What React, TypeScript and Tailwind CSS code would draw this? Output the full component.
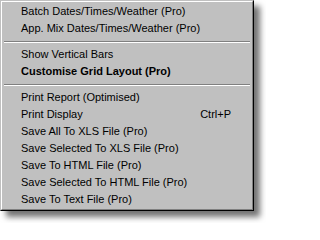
import React from 'react';

type MenuEntry =
    | { kind: 'item'; label: string; shortcut?: string; bold?: boolean }
    | { kind: 'separator' };

const entries: MenuEntry[] = [
    { kind: 'item', label: 'Batch Dates/Times/Weather (Pro)' },
    { kind: 'item', label: 'App. Mix Dates/Times/Weather (Pro)' },
    { kind: 'separator' },
    { kind: 'item', label: 'Show Vertical Bars' },
    { kind: 'item', label: 'Customise Grid Layout (Pro)', bold: true },
    { kind: 'separator' },
    { kind: 'item', label: 'Print Report (Optimised)' },
    { kind: 'item', label: 'Print Display', shortcut: 'Ctrl+P' },
    { kind: 'item', label: 'Save All To XLS File (Pro)' },
    { kind: 'item', label: 'Save Selected To XLS File (Pro)' },
    { kind: 'item', label: 'Save To HTML File (Pro)' },
    { kind: 'item', label: 'Save Selected To HTML File (Pro)' },
    { kind: 'item', label: 'Save To Text File (Pro)' },
];

const MenuRow: React.FC<{ label: string; shortcut?: string; bold?: boolean }> = ({ label, shortcut, bold }) => (
    <div className="flex items-center h-[17px] leading-[17px] pl-[18px] pr-[20px] text-black whitespace-nowrap">
        <span className={`flex-1 ${bold ? 'font-bold' : ''}`}>{label}</span>
        {shortcut && <span>{shortcut}</span>}
    </div>
);

export default function App() {
    return (
        <div className="w-[266px] h-[223px] bg-white overflow-hidden">
            {/* Popup menu, Win classic 3D frame */}
            <div className="w-[254px] h-[211px] border border-t-[#c0c0c0] border-l-[#c0c0c0] border-r-black border-b-black shadow-[6px_6px_6px_rgba(0,0,0,0.55)]">
                <div className="h-full border border-t-white border-l-white border-r-[#808080] border-b-[#808080] bg-[#c0c0c0] p-px text-[11px] font-['Liberation_Sans',Arial,sans-serif]">
                    {entries.map((entry, i) =>
                        entry.kind === 'separator' ? (
                            <div key={i} className="h-[9px] flex items-center px-px">
                                <div className="w-full border-t border-t-[#808080] border-b border-b-white" />
                            </div>
                        ) : (
                            <MenuRow key={i} label={entry.label} shortcut={entry.shortcut} bold={entry.bold} />
                        )
                    )}
                </div>
            </div>
        </div>
    );
}
